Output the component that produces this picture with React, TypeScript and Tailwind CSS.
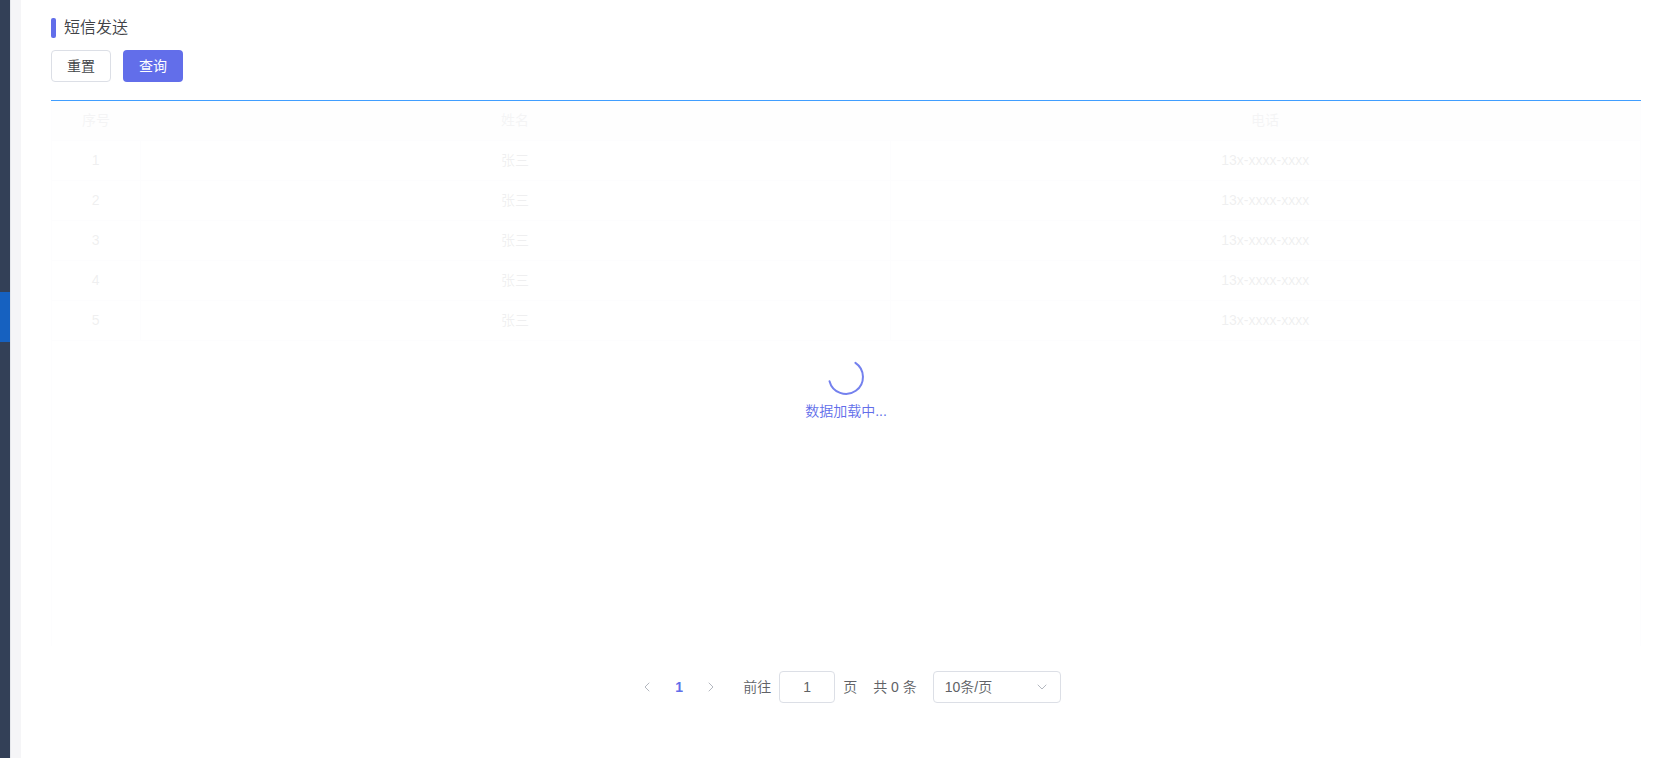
import { useState } from "react";
import { ChevronDown, ChevronLeft, ChevronRight } from "lucide-react";

interface Contact {
  id: number;
  name: string;
  phone: string;
}

const contacts: Contact[] = [1, 2, 3, 4, 5].map((id) => ({
  id,
  name: "张三",
  phone: "13x-xxxx-xxxx",
}));

function Sidebar() {
  return (
    <nav className="flex w-[10px] shrink-0 flex-col bg-[#334057]">
      <a href="#sms" aria-label="短信发送" className="mt-[292px] block h-[50px] bg-[#1661c0]" />
    </nav>
  );
}

function LoadingMask() {
  return (
    <div
      role="status"
      className="absolute inset-0 flex flex-col items-center justify-center bg-white/90 pt-[29px] text-[#626eea]"
    >
      <svg className="size-[42px]" viewBox="0 0 42 42" fill="none" aria-hidden="true">
        <path
          d="M30.4 6.8A17 17 0 1 1 4.5 25.2"
          stroke="#7481ee"
          strokeWidth="2"
          strokeLinecap="round"
        />
      </svg>
      <p className="mt-[3px] text-sm leading-5">数据加载中...</p>
    </div>
  );
}

function ContactTable() {
  return (
    <div className="relative h-[545px] border-x border-[#fdfdfe]">
      <table className="w-full table-fixed border-collapse text-center text-sm text-[#606266]">
        <colgroup>
          <col className="w-[88px]" />
          <col />
          <col />
        </colgroup>
        <thead>
          <tr className="h-[39px] border-b border-[#ebeef5] bg-[#f0f1f5] text-[#909399]">
            <th className="font-normal">序号</th>
            <th className="font-normal">姓名</th>
            <th className="font-normal">电话</th>
          </tr>
        </thead>
        <tbody>
          {contacts.map((contact) => (
            <tr key={contact.id} className="h-10 border-b border-[#ebeef5]">
              <td className="border-r border-[#ebeef5]">{contact.id}</td>
              <td className="border-r border-[#ebeef5]">{contact.name}</td>
              <td>{contact.phone}</td>
            </tr>
          ))}
        </tbody>
      </table>
      <LoadingMask />
    </div>
  );
}

function Pagination() {
  const [page, setPage] = useState("1");
  return (
    <div className="flex h-8 items-center justify-center text-sm text-[#606266]">
      <button type="button" aria-label="上一页" className="flex size-8 items-center justify-center text-[#b4b8c0]">
        <ChevronLeft size={16} strokeWidth={1.5} />
      </button>
      <button type="button" className="size-8 font-bold text-[#626eea]">
        1
      </button>
      <button type="button" aria-label="下一页" className="flex size-8 items-center justify-center text-[#b4b8c0]">
        <ChevronRight size={16} strokeWidth={1.5} />
      </button>
      <label className="ml-4 flex items-center gap-2">
        前往
        <input
          value={page}
          onChange={(event) => setPage(event.target.value)}
          className="h-8 w-14 rounded border border-[#dcdfe6] bg-white text-center outline-none"
        />
        页
      </label>
      <span className="mx-4">共 0 条</span>
      <div className="relative">
        <select
          aria-label="每页条数"
          className="block h-8 w-32 appearance-none rounded border border-[#dcdfe6] bg-white pl-[11px] outline-none"
        >
          <option>10条/页</option>
          <option>20条/页</option>
          <option>50条/页</option>
        </select>
        <ChevronDown
          size={16}
          strokeWidth={1.5}
          className="pointer-events-none absolute top-2 right-[11px] text-[#b4b8c0]"
        />
      </div>
    </div>
  );
}

export default function App() {
  return (
    <div className="flex min-h-screen bg-white font-['Liberation_Sans','Noto_Sans_CJK_SC',sans-serif] font-[350]">
      <Sidebar />
      <div className="w-[11px] shrink-0 border-l border-[#e6e8ec] bg-[#f5f5f7]" />
      <main className="min-w-0 flex-1 pt-[18px] pr-[22px] pl-[30px]">
        <div className="flex h-5 items-center gap-2">
          <span className="h-5 w-[5px] rounded-xs bg-[#626eea]" />
          <h1 className="text-base leading-5 font-[350] text-[#404246]">短信发送</h1>
        </div>
        <div className="mt-3 flex gap-3">
          <button type="button" className="h-8 w-[60px] rounded border border-[#dcdfe6] bg-white text-sm text-[#404246]">
            重置
          </button>
          <button type="button" className="h-8 w-[60px] rounded bg-[#626eea] text-sm font-normal text-white">
            查询
          </button>
        </div>
        <section className="mt-[18px] border-t border-[#409eff]">
          <ContactTable />
        </section>
        <footer className="mt-[25px]">
          <Pagination />
        </footer>
      </main>
    </div>
  );
}
